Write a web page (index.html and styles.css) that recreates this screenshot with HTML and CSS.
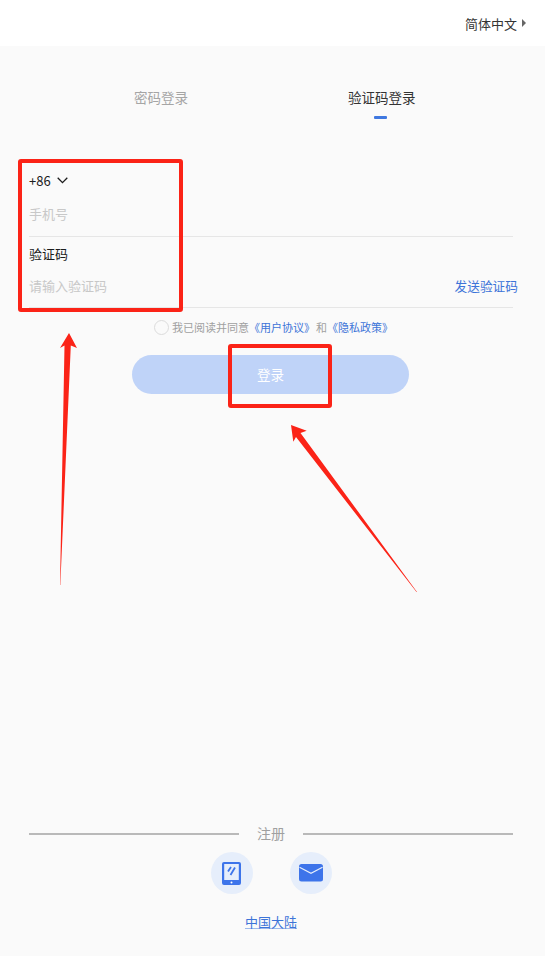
FILE: index.html
```html
<!DOCTYPE html>
<html lang="zh-CN">
<head>
    <meta charset="UTF-8">
    <meta name="viewport" content="width=device-width, initial-scale=1.0">
    <title>登录</title>
    <link rel="stylesheet" href="styles.css">
</head>
<body>
    <div class="page">
        <header class="top-bar">
            <span class="lang">简体中文</span>
            <span class="lang-caret"></span>
        </header>

        <nav class="tabs">
            <div class="tab">密码登录</div>
            <div class="tab active">验证码登录</div>
        </nav>

        <form class="login-form">
            <div class="field phone-field">
                <div class="field-label">
                    <span>+86</span>
                    <svg class="chevron" width="11" height="7" viewBox="0 0 11 7"><path d="M.7.8 5.500 5.600 10.300.8" fill="none" stroke="#1c1c1c" stroke-width="1.3"/></svg>
                </div>
                <div class="placeholder">手机号</div>
            </div>
            <div class="field code-field">
                <div class="field-label">验证码</div>
                <div class="code-row">
                    <div class="placeholder">请输入验证码</div>
                    <a class="send-code">发送验证码</a>
                </div>
            </div>

            <div class="agree">
                <span class="radio"></span>
                <span>我已阅读并同意</span>
                <a>《用户协议》</a>
                <span class="agree-and">和</span>
                <a>《隐私政策》</a>
            </div>

            <div class="login-button">登录</div>
        </form>

        <footer class="register">
            <div class="divider">
                <span class="divider-line"></span>
                <span class="divider-text">注册</span>
                <span class="divider-line"></span>
            </div>
            <div class="register-icons">
                <div class="icon-circle">
                    <svg width="19" height="23" viewBox="0 0 19 23">
                        <path fill="#3d74ea" fill-rule="evenodd" d="M2 0h15a2 2 0 0 1 2 2v19a2 2 0 0 1-2 2H2a2 2 0 0 1-2-2V2a2 2 0 0 1 2-2Zm.2 2v16h14.600V2Z"/>
                        <circle cx="9.500" cy="20.500" r="1" fill="#fff"/>
                        <path d="M9 5 6 9.500M13 5.500 8.500 13" fill="none" stroke="#3d74ea" stroke-width="1.800"/>
                    </svg>
                </div>
                <div class="icon-circle">
                    <svg width="24" height="18" viewBox="0 0 24 18">
                        <rect width="24" height="17.500" rx="2.500" fill="#3d74ea"/>
                        <path d="M0.500 3.200 12 9.200 23.500 3.200" fill="none" stroke="#e6eefb" stroke-width="1.200"/>
                    </svg>
                </div>
            </div>
            <a class="region">中国大陆</a>
        </footer>

        <!-- red marks drawn over the screenshot -->
        <div class="mark mark-form"></div>
        <div class="mark mark-button"></div>
        <svg class="arrows" width="545" height="956" viewBox="0 0 545 956">
            <path fill="#fb2317" d="M69 333 77 348 70.800 345.500 60.300 585 60 585 64.500 345.500 60 348Z"/>
            <path fill="#fb2317" d="M291 425 306.700 430.700 300.500 433 417 592 416.500 592 296 437 293.300 441.700Z"/>
        </svg>
    </div>
</body>
</html>
```

FILE: styles.css
```css
body {
    margin: 0;
    background-color: #fafafa;
    font-family: "Noto Sans CJK SC", "Liberation Sans", sans-serif;
    color: #1c1c1c;
}
a {
    color: #3d74d8;
}
.page {
    position: relative;
    width: 545px;
    height: 956px;
    overflow: hidden;
    display: flex;
    flex-direction: column;
}
.top-bar {
    height: 46px;
    background-color: #ffffff;
    display: flex;
    align-items: center;
    justify-content: flex-end;
    padding: 0 19px 0 0;
    font-size: 13px;
    color: #333;
}
.lang-caret {
    margin-left: 5px;
    border-left: 4px solid #666;
    border-top: 4px solid transparent;
    border-bottom: 4px solid transparent;
}
.tabs {
    display: flex;
    gap: 160px;
    height: 74px;
    padding: 40px 0 0 134px;
    box-sizing: border-box;
}
.tab {
    position: relative;
    font-size: 13.500px;
    line-height: 22px;
    color: #a5a5a5;
    white-space: nowrap;
}
.tab.active {
    color: #333;
}
.tab.active::after {
    content: "";
    position: absolute;
    left: 26px;
    top: 30px;
    width: 13px;
    height: 3px;
    border-radius: 1px;
    background-color: #3f78e0;
}
.login-form {
    padding: 0 32px 0 29px;
    margin-top: 50px;
}
.field {
    border-bottom: 1px solid #e6e6e6;
    box-sizing: border-box;
}
.phone-field {
    height: 67px;
}
.code-field {
    height: 71px;
}
.field-label {
    display: flex;
    align-items: center;
    gap: 6px;
    font-size: 13px;
}
.phone-field .field-label {
    height: 20px;
}
.code-field .field-label {
    height: 32px;
}
.placeholder {
    font-size: 13px;
    line-height: 20px;
    color: #c8c8c8;
}
.phone-field .placeholder {
    margin-top: 14px;
}
.code-row {
    position: relative;
}
.code-row .placeholder {
    padding-top: 7px;
}
.send-code {
    position: absolute;
    right: -5px;
    top: 7px;
    font-size: 12.700px;
    line-height: 20px;
}
.agree {
    display: flex;
    align-items: center;
    margin: 11px 0 0 125px;
    font-size: 11px;
    line-height: 16px;
    color: #a0a0a0;
    white-space: nowrap;
}
.agree-and {
    margin-left: 1px;
}
.radio {
    width: 13px;
    height: 13px;
    border: 1px solid #dcdcdc;
    border-radius: 50%;
    margin-right: 3px;
}
.login-button {
    width: 277px;
    height: 39px;
    margin: 20px 0 0 103px;
    border-radius: 20px;
    background-color: #bfd3f8;
    color: #ffffff;
    font-size: 13.500px;
    line-height: 39px;
    text-align: center;
}
.register {
    position: absolute;
    left: 29px;
    right: 32px;
    top: 824px;
    text-align: center;
}
.divider {
    display: flex;
    align-items: center;
    height: 20px;
}
.divider-line {
    flex: 1;
    height: 2px;
    background-color: #b9b9b9;
}
.divider-text {
    width: 64px;
    margin-top: -2px;
    font-size: 14px;
    color: #a0a0a0;
}
.register-icons {
    display: flex;
    justify-content: center;
    gap: 37px;
    margin-top: 8px;
}
.icon-circle {
    width: 42px;
    height: 42px;
    border-radius: 50%;
    background-color: #e6eefb;
    display: flex;
    align-items: center;
    justify-content: center;
}
.region {
    display: inline-block;
    margin-top: 20px;
    font-size: 13px;
    line-height: 16px;
    text-decoration: underline;
    text-decoration-color: #9db9ec;
}
.mark {
    position: absolute;
    box-sizing: border-box;
    border: 4px solid #fb2317;
    border-radius: 3px;
}
.mark-form {
    left: 18px;
    top: 159px;
    width: 165px;
    height: 153px;
}
.mark-button {
    left: 228px;
    top: 344px;
    width: 104px;
    height: 64px;
}
.arrows {
    position: absolute;
    left: 0;
    top: 0;
}
```
